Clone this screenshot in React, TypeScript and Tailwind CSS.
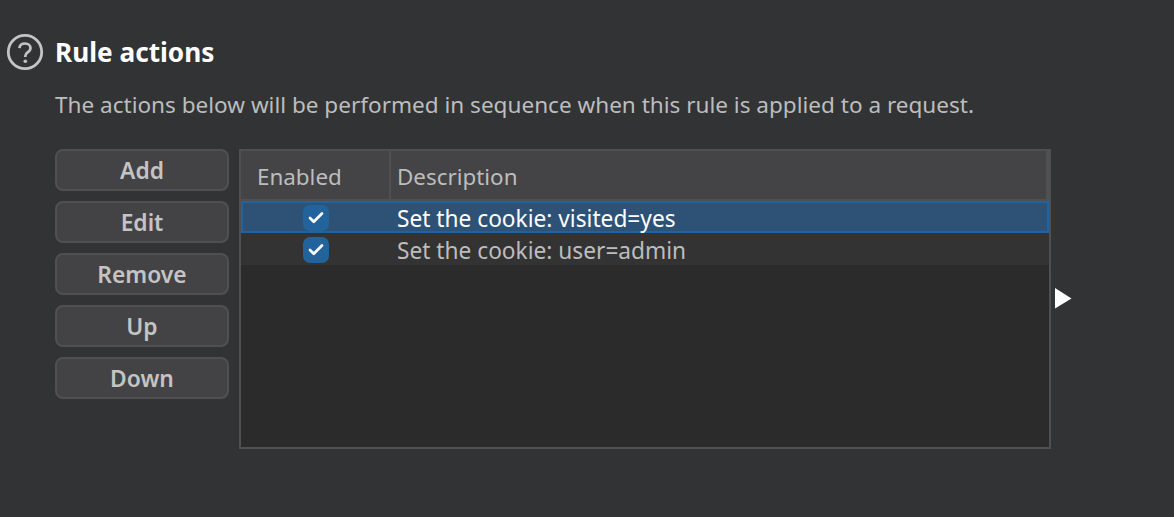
import { Check } from 'lucide-react';

const buttons = ['Add', 'Edit', 'Remove', 'Up', 'Down'];

const rows = [
  { text: 'Set the cookie: visited=yes', selected: true },
  { text: 'Set the cookie: user=admin', selected: false },
];

function HelpIcon() {
  return (
    <svg width="38" height="38" viewBox="0 0 38 38" fill="none" className="shrink-0">
      <circle cx="19" cy="19" r="16.7" stroke="#c4c4c4" strokeWidth="2.8" />
      <path
        d="M13.4 15.2c.3-3 2.6-4.7 5.6-4.7 3.1 0 5.5 1.8 5.5 4.6 0 2.1-1.2 3.2-2.9 4.3-1.6 1.1-2.3 1.9-2.3 3.7v.9"
        stroke="#c4c4c4"
        strokeWidth="2.7"
      />
      <circle cx="19.3" cy="28.2" r="1.8" fill="#c4c4c4" />
    </svg>
  );
}

export default function App() {
  return (
    <div className="h-[517px] w-[1174px] overflow-hidden bg-[#323335] pl-[6px] pt-[33px] font-['Noto_Sans',sans-serif]">
      <div className="flex items-center gap-[11px]">
        <HelpIcon />
        <h2 className="text-[26.2px] font-bold leading-[36px] text-white">Rule actions</h2>
      </div>

      <div className="pl-[49px]">
        <p className="mt-[19px] text-[22.55px] leading-[30px] text-[#bdbdbd]">
          The actions below will be performed in sequence when this rule is applied to a request.
        </p>

        <div className="mt-[29px] flex items-start gap-[10px]">
          <div className="flex w-[174px] flex-col gap-[10px]">
            {buttons.map((label) => (
              <button
                key={label}
                className="h-[42px] rounded-[8px] border-2 border-[#505052] bg-[#434345] pt-[2px] text-[22.8px] leading-none font-semibold text-[#c4c4c4]"
              >
                {label}
              </button>
            ))}
          </div>

          <div className="flex h-[300px] w-[812px] flex-col border-2 border-[#505052] bg-[#2b2b2b]">
            <div className="flex h-[50px] shrink-0 border-r-[3px] border-b-[2px] border-[#505052] bg-[#444446] text-[22.4px] leading-[52px] text-[#bdbdbd]">
              <div className="w-[150px] border-r-2 border-[#505052] pl-[16px]">Enabled</div>
              <div className="pl-[6px]">Description</div>
            </div>
            {rows.map((row) => (
              <div
                key={row.text}
                className={
                  row.selected
                    ? 'flex h-[32px] items-center border-2 border-[#23639c] bg-[#2d5276] text-[22.7px] text-white'
                    : 'flex h-[32px] items-center border-2 border-transparent bg-[#333334] text-[22.7px] text-[#bdbdbd]'
                }
              >
                <div className="flex w-[154px] justify-center pt-[2px] pr-[9px]">
                  <span className="flex h-[26px] w-[26px] items-center justify-center rounded-[7px] bg-[#23639c]">
                    <Check size={18} strokeWidth={3.6} color="#ffffff" />
                  </span>
                </div>
                <span className="pt-[4px] leading-none">{row.text}</span>
              </div>
            ))}
          </div>

          <svg width="17" height="21" viewBox="0 0 17 21" className="mt-[139px] -ml-[6px]">
            <path d="M0 0L16.5 10.5L0 20.5Z" fill="#ffffff" />
          </svg>
        </div>
      </div>
    </div>
  );
}
